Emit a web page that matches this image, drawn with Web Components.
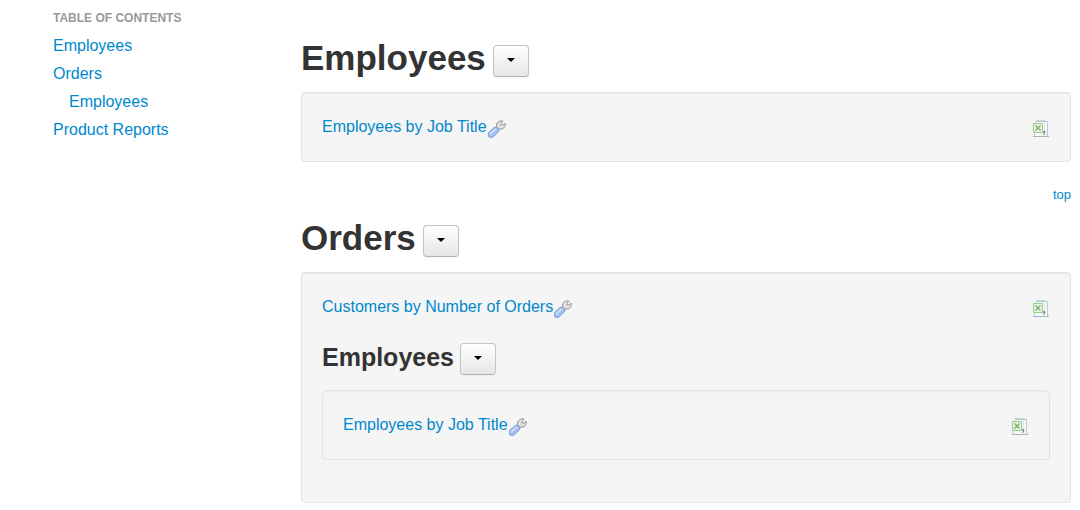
<!DOCTYPE html>
<html lang="en">
<head>
<meta charset="utf-8">
<title>Reports</title>
<style>
  body { margin: 0; background: #fff; color: #333; font-family: "Liberation Sans", Arial, sans-serif; font-size: 16px; line-height: 20px; }
</style>
</head>
<body>
<report-page></report-page>

<script>
const define = (name, html) => {
  const template = document.createElement('template');
  template.innerHTML = html;
  customElements.define(name, class extends HTMLElement {
    constructor() {
      super();
      this.attachShadow({ mode: 'open' }).append(template.content.cloneNode(true));
    }
    connectedCallback() {
      const href = this.getAttribute('href');
      const link = this.shadowRoot.querySelector('a');
      if (href && link) link.href = href;
    }
  });
};

define('nav-item', `
  <style>
    :host { display: block; }
    :host([nested]) { padding-left: 16px; }
    a { color: #08c; text-decoration: none; line-height: 28px; }
  </style>
  <a><slot></slot></a>`);

define('contents-nav', `
  <style>
    :host { display: block; }
    h2 { margin: 0; padding: 4px 0 0; font-size: 12px; line-height: 28px; text-transform: uppercase; color: #999; text-shadow: 0 1px 0 rgba(255,255,255,.5); }
  </style>
  <nav aria-labelledby="toc"><h2 id="toc">Table of Contents</h2><slot></slot></nav>`);

define('menu-button', `
  <style>
    :host { display: block; flex: none; }
    button { display: flex; align-items: center; justify-content: center; width: 36px; height: 32px; padding: 0 0 2px; box-sizing: border-box;
      border: 1px solid #c5c5c5; border-bottom-color: #b3b3b3; border-radius: 4px;
      background: linear-gradient(#fff, #e6e6e6); box-shadow: inset 0 1px 0 rgba(255,255,255,.2), 0 1px 2px rgba(0,0,0,.05); }
    i { border: 4px solid transparent; border-top-color: #000; border-bottom: 0; }
  </style>
  <button type="button" aria-label="Section menu" aria-haspopup="true"><i></i></button>`);

define('section-heading', `
  <style>
    :host { display: flex; align-items: center; gap: 7px; height: 32px; margin-bottom: 15px; font-size: 35px; line-height: 32px; }
    :host([level="2"]) { font-size: 25px; gap: 6px; margin-top: 21px; }
    h1 { margin: 0; padding-bottom: 6px; font: inherit; font-weight: bold; }
    :host([level="2"]) h1 { padding-bottom: 4px; }
  </style>
  <h1><slot></slot></h1><menu-button></menu-button>`);

define('report-well', `
  <style>
    :host { display: block; padding: 19px 20px; border: 1px solid #e3e3e3; border-radius: 4px; background: #f5f5f5; box-shadow: inset 0 1px 1px rgba(0,0,0,.05); }
    :host([nested]) { margin-bottom: 23px; }
  </style>
  <slot></slot>`);

define('wrench-icon', `
  <style>:host, svg { display: block; }</style>
  <svg width="18" height="18" viewBox="0 0 18 18" aria-hidden="true">
    <path d="M8 8 8.6 6.6 8.7 3.6 10.8 1.5 14 .7 15 1.2 13 3.3 13.3 4.8 14.9 5.1 16.9 3.2 17.5 4.1 16.7 7 14.5 9 11.9 8.9 10.2 10.4Z" fill="#d6d6d6" stroke="#969696"/>
    <path d="M10 7.5 11 3.5 13 1.8M11.5 7.3 14.5 7.1 16.2 5.4" fill="none" stroke="#f2f2f2"/>
    <path d="M.9 12.3 6.2 7.5Q8.3 6.3 10 8 11.6 9.7 10.5 11.7L5.4 16.7Q3.1 18.2 1 16.9-.7 14.6.9 12.3Z" fill="#a4c1f2" stroke="#7797d4"/>
    <path d="M2 14.2 7.8 9" stroke="#d3e2fc" stroke-width="1.6"/>
  </svg>`);

define('excel-icon', `
  <style>:host, svg { display: block; }</style>
  <svg width="18" height="18" viewBox="0 0 18 18" aria-hidden="true">
    <path d="M4.5 1.5H15.5V16.5H2.5V3.5Z" fill="#f3f8f8" stroke="#b9c9cd"/>
    <path d="M4 .5H13.5" stroke="#ccd6d8"/>
    <path d="M1 16.5H17" stroke="#a9b6b5"/>
    <path d="M12.5 2V11" stroke="#dce6e8"/>
    <path d="M1.5 3.5H10.5V12.5H1.5Z" fill="#e3f2dd" stroke="#9fcb8c"/>
    <path d="M3 5H9V11H3Z" fill="#eff7ea"/>
    <path d="M3.5 5.5 8.5 10.5M8.5 5.5 3.5 10.5" stroke="#83b173" stroke-width="1.6"/>
    <path d="M11.3 11H13.2V13.1Q13 14.6 11.2 15.1L10.9 14.3Q12 14 12 13H11.3Z" fill="#748587"/>
  </svg>`);

define('report-row', `
  <style>
    :host { display: flex; align-items: center; height: 30px; }
    a { color: #08c; text-decoration: none; }
    wrench-icon { margin: 3px auto 0 1px; }
    excel-icon { margin-top: 3px; }
  </style>
  <a><slot></slot></a><wrench-icon></wrench-icon><excel-icon></excel-icon>`);

define('top-link', `
  <style>
    :host { display: block; margin: 23px 0 20px; text-align: right; font-size: 13px; line-height: 20px; }
    a { color: #08c; text-decoration: none; }
  </style>
  <a><slot></slot></a>`);

define('report-page', `
  <style>
    :host { display: grid; grid-template-columns: 248px minmax(0, 1fr); padding: 0 9px 7px 53px; }
    main { padding-top: 45px; }
  </style>
  <contents-nav>
    <nav-item href="#employees">Employees</nav-item>
    <nav-item href="#orders">Orders</nav-item>
    <nav-item href="#order-employees" nested>Employees</nav-item>
    <nav-item href="#products">Product Reports</nav-item>
  </contents-nav>
  <main id="top">
    <section-heading id="employees">Employees</section-heading>
    <report-well><report-row href="#job-title">Employees by Job Title</report-row></report-well>
    <top-link href="#top">top</top-link>
    <section-heading id="orders">Orders</section-heading>
    <report-well>
      <report-row href="#customers">Customers by Number of Orders</report-row>
      <section-heading id="order-employees" level="2">Employees</section-heading>
      <report-well nested><report-row href="#order-job-title">Employees by Job Title</report-row></report-well>
    </report-well>
  </main>`);
</script>
</body>
</html>
